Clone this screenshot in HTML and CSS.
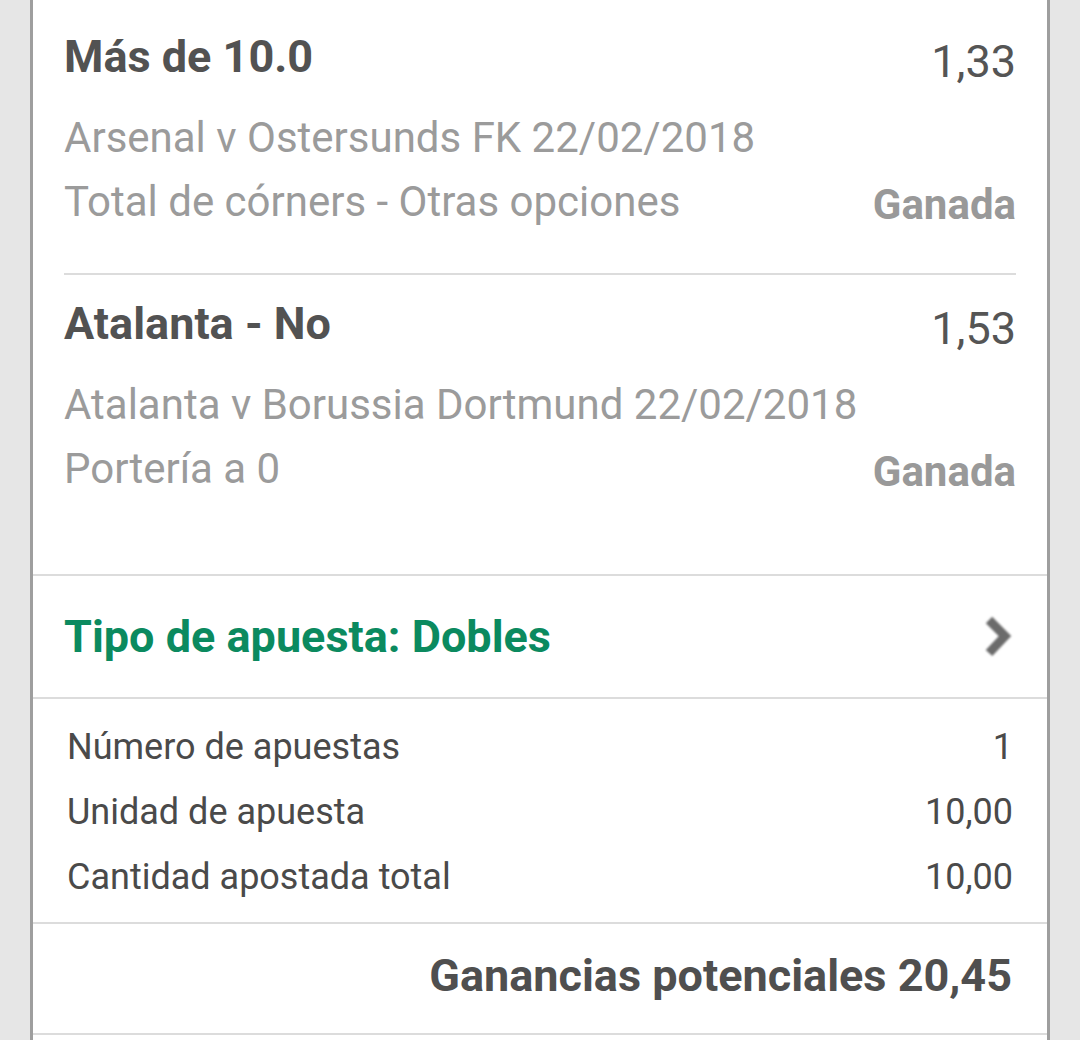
FILE: index.html
```html
<!DOCTYPE html>
<html lang="es">
<head>
  <meta charset="UTF-8" />
  <meta name="viewport" content="width=device-width, initial-scale=1.0"/>
  <title>Boleto de apuesta</title>
  <link rel="stylesheet" href="styles.css">
</head>
<body>
  <div class="slip">
    <div class="selections">
      <div class="selection">
        <div class="sel-head">
          <span class="sel-name">Más de 10.0</span>
          <span class="sel-odds">1,33</span>
        </div>
        <div class="sel-event">Arsenal v Ostersunds FK 22/02/2018</div>
        <div class="sel-market">
          <span>Total de córners - Otras opciones</span>
          <span class="sel-result">Ganada</span>
        </div>
      </div>

      <div class="selection">
        <div class="sel-head">
          <span class="sel-name">Atalanta - No</span>
          <span class="sel-odds">1,53</span>
        </div>
        <div class="sel-event">Atalanta v Borussia Dortmund 22/02/2018</div>
        <div class="sel-market">
          <span>Portería a 0</span>
          <span class="sel-result">Ganada</span>
        </div>
      </div>
    </div>

    <div class="bet-type">
      <span>Tipo de apuesta: Dobles</span>
      <svg class="chevron" width="32" height="44" viewBox="0 0 32 44">
        <polyline points="7,5 23,21 7,38" fill="none" stroke="#6b6b6b" stroke-width="9" stroke-linejoin="miter"/>
      </svg>
    </div>

    <div class="summary">
      <div class="summary-row">
        <span>Número de apuestas</span>
        <span>1</span>
      </div>
      <div class="summary-row">
        <span>Unidad de apuesta</span>
        <span>10,00</span>
      </div>
      <div class="summary-row">
        <span>Cantidad apostada total</span>
        <span>10,00</span>
      </div>
    </div>

    <div class="returns">Ganancias potenciales 20,45</div>
  </div>
</body>
</html>
```

FILE: styles.css
```css
* {
  margin: 0;
  padding: 0;
  box-sizing: border-box;
}

body {
  background: #e6e6e6;
  font-family: Roboto, 'Liberation Sans', sans-serif;
  overflow: hidden;
}

.slip {
  margin: 0 30px;
  background: #fff;
  border-left: 3px solid #9e9e9e;
  border-right: 3px solid #9e9e9e;
  min-height: 1100px;
}

.selections {
  padding: 0 31px 73px;
}

.selection {
  padding-top: 32px;
  padding-bottom: 39px;
}

.selection + .selection {
  border-top: 2px solid #dcdcdc;
  padding-top: 24px;
  padding-bottom: 0;
}

.sel-head {
  display: flex;
  justify-content: space-between;
  align-items: flex-start;
  height: 50px;
  line-height: 50px;
  font-size: 45px;
  margin-bottom: 24px;
}

.sel-name {
  font-weight: bold;
  color: #525252;
}

.sel-odds {
  color: #555;
  margin-top: 5px;
}

.sel-event,
.sel-market {
  font-size: 42px;
  line-height: 64px;
  color: #9b9b9b;
}

.sel-market {
  display: flex;
  justify-content: space-between;
  align-items: flex-start;
  height: 64px;
}

.sel-result {
  font-weight: bold;
  color: #999;
  margin-top: 3px;
}

.bet-type {
  display: flex;
  justify-content: space-between;
  align-items: center;
  height: 125px;
  padding: 0 33px 0 31px;
  border-top: 2px solid #dcdcdc;
  border-bottom: 2px solid #dcdcdc;
  font-size: 45px;
  font-weight: bold;
  color: #0b8a5f;
}

.chevron {
  filter: blur(0.8px);
}

.summary {
  padding: 16px 34px 12px;
  border-bottom: 2px solid #dcdcdc;
}

.summary-row {
  display: flex;
  justify-content: space-between;
  font-size: 36px;
  line-height: 65px;
  color: #4a4a4a;
}

.returns {
  height: 111px;
  line-height: 103px;
  padding: 0 35px;
  text-align: right;
  font-size: 45px;
  font-weight: bold;
  color: #4f4f4f;
  border-bottom: 2px solid #dcdcdc;
}
```
